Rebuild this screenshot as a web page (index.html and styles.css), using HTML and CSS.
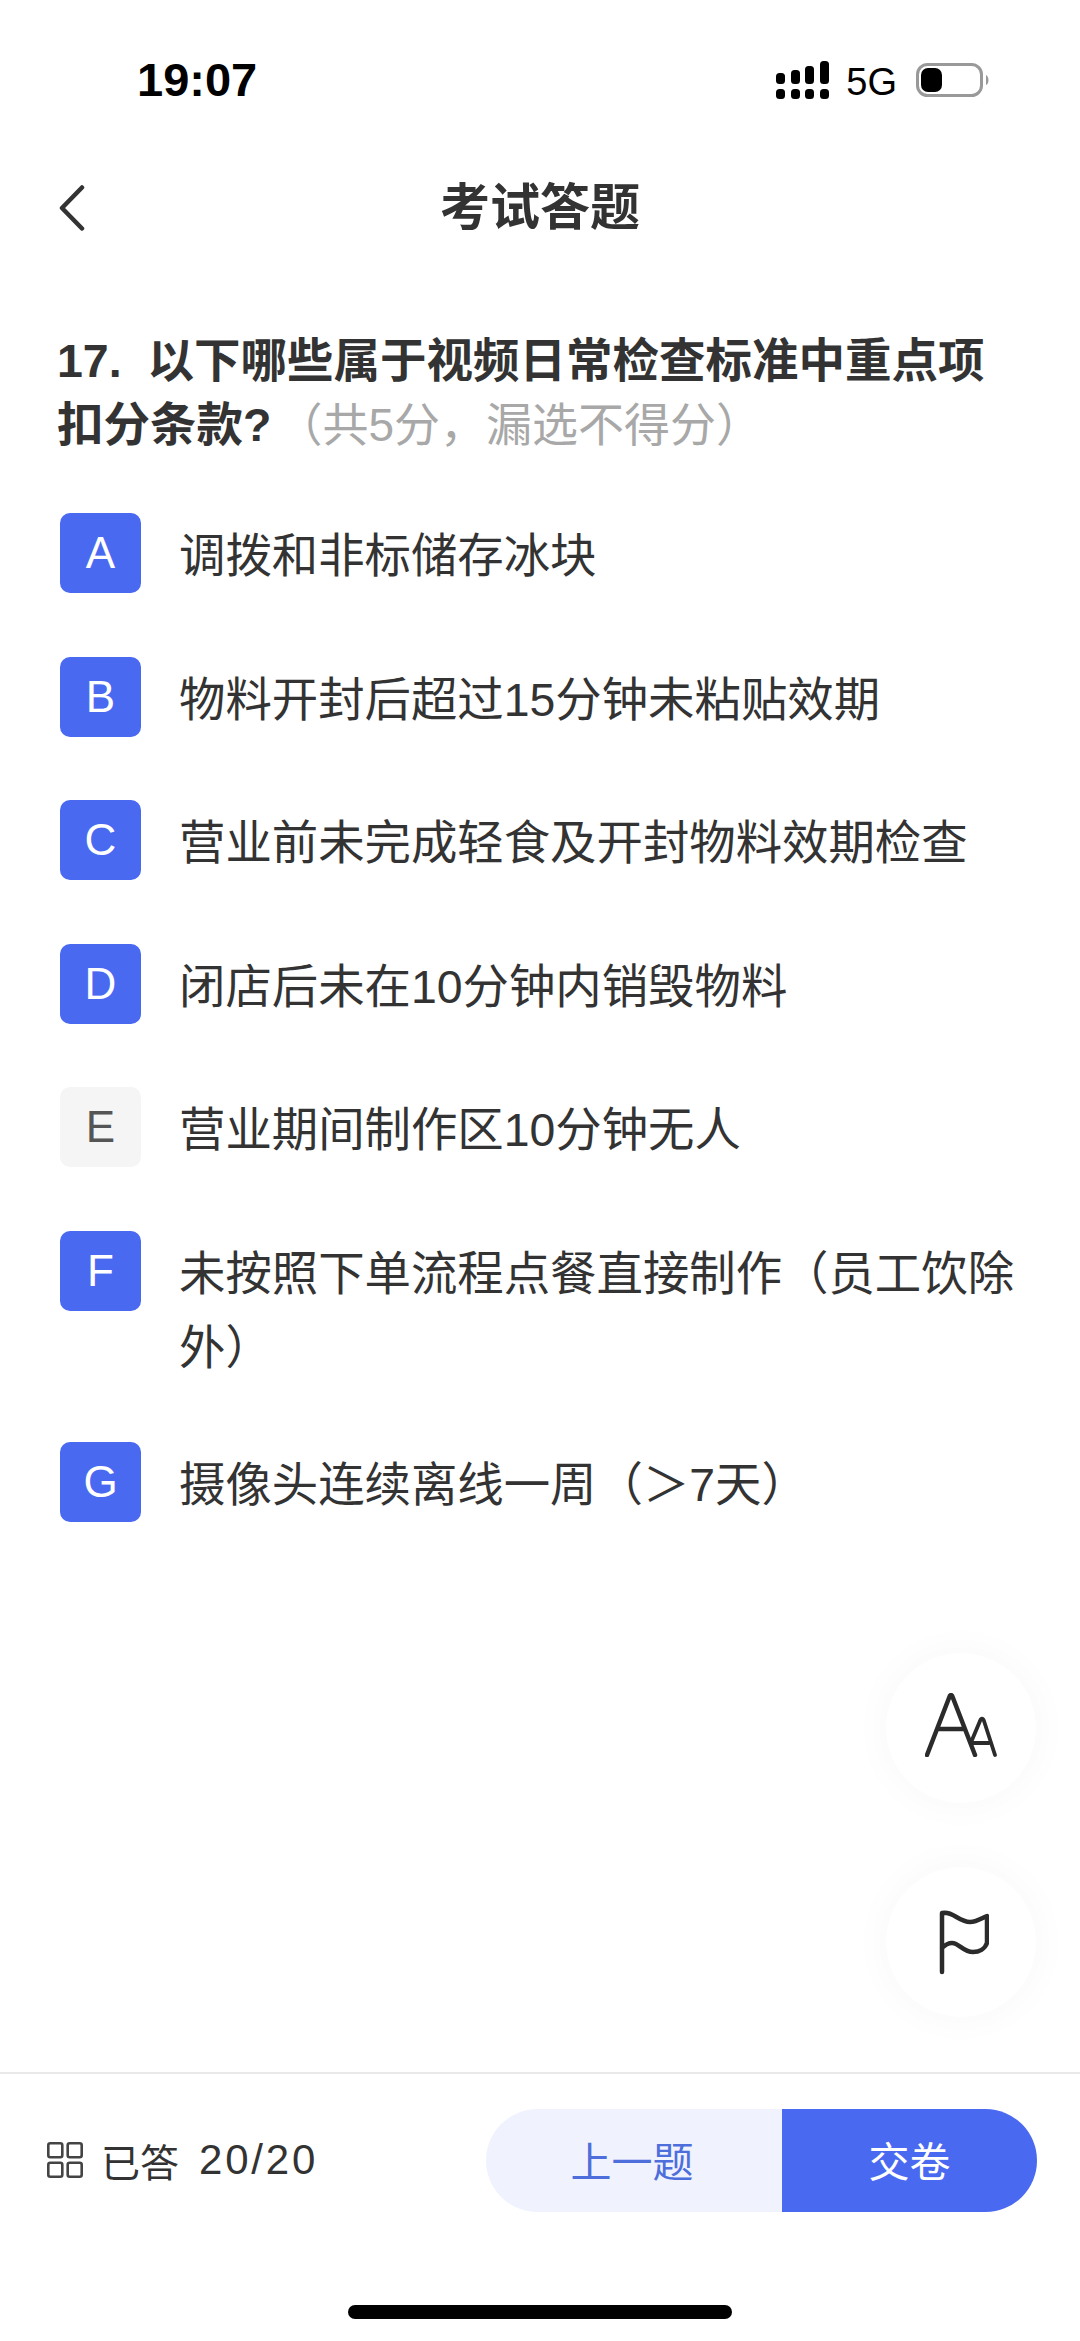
FILE: index.html
```html
<!DOCTYPE html>
<html lang="zh-CN">
<head>
<meta charset="utf-8">
<title>考试答题</title>
<link rel="stylesheet" href="styles.css">
</head>
<body>
<div class="screen">
  <header class="status">
    <span class="clock">19:07</span>
    <div class="status-right">
      <svg class="signal" width="54" height="40" viewBox="0 0 54 40" fill="#000">
        <rect x="0" y="12" width="9" height="11" rx="3.5"/><rect x="15" y="9" width="9" height="14" rx="3.5"/><rect x="29" y="5" width="9" height="18" rx="3.5"/><rect x="44" y="0" width="9" height="23" rx="3.5"/>
        <rect x="0" y="28" width="9" height="10" rx="3.5"/><rect x="15" y="28" width="9" height="10" rx="3.5"/><rect x="29" y="28" width="9" height="10" rx="3.5"/><rect x="44" y="28" width="9" height="10" rx="3.5"/>
      </svg>
      <span class="network">5G</span>
      <svg class="battery" width="74" height="34" viewBox="0 0 74 34">
        <rect x="1.5" y="1.5" width="64" height="31" rx="10" fill="none" stroke="#999" stroke-width="3"/>
        <rect x="5" y="5" width="21" height="24" rx="7" fill="#000"/>
        <path d="M70 12c3 1 3.500 9 0 10z" fill="#999"/>
      </svg>
    </div>
  </header>

  <nav class="topbar">
    <svg class="back" width="26" height="46" viewBox="0 0 26 46" fill="none" stroke="#333" stroke-width="4.500" stroke-linecap="round" stroke-linejoin="round">
      <path d="M23 2.500 3 23l20 20.500"/>
    </svg>
    <h1 class="title">考试答题</h1>
  </nav>

  <main class="paper">
    <h2 class="question">17.&nbsp;&nbsp;以下哪些属于视频日常检查标准中重点项扣分条款?<span class="hint">（共5分，漏选不得分）</span></h2>
    <ul class="options">
      <li class="option"><span class="badge picked">A</span><span class="option-text">调拨和非标储存冰块</span></li>
      <li class="option"><span class="badge picked">B</span><span class="option-text">物料开封后超过15分钟未粘贴效期</span></li>
      <li class="option"><span class="badge picked">C</span><span class="option-text">营业前未完成轻食及开封物料效期检查</span></li>
      <li class="option"><span class="badge picked">D</span><span class="option-text">闭店后未在10分钟内销毁物料</span></li>
      <li class="option"><span class="badge">E</span><span class="option-text">营业期间制作区10分钟无人</span></li>
      <li class="option"><span class="badge picked">F</span><span class="option-text">未按照下单流程点餐直接制作（员工饮除外）</span></li>
      <li class="option"><span class="badge picked">G</span><span class="option-text">摄像头连续离线一周（＞7天）</span></li>
    </ul>

    <button class="fab fab-font" type="button" aria-label="字号">
      <svg class="fab-font-icon" width="72" height="64" viewBox="0 0 72 64" fill="none" stroke="#2b2b2b" stroke-linecap="round" stroke-linejoin="round">
        <path stroke-width="4.500" d="M2 62 24 5c1-4 3-4 4 0l22 57M13 36h26"/>
        <path stroke-width="3.800" d="M47 47 55 28c1-3 3-3 4 0l11 34M47 50h17"/>
      </svg>
    </button>
    <button class="fab fab-flag" type="button" aria-label="标记">
      <svg width="56" height="66" viewBox="0 0 56 66" fill="none" stroke="#2b2b2b" stroke-width="4.500" stroke-linecap="round" stroke-linejoin="round">
        <path d="M9 63V4C20 2 26 13 37 13 44 13 49 9 54 7V34C52 40 46 43 40 43 30 43 26 34 19 34 15 34 12 36 9 39"/>
      </svg>
    </button>
  </main>

  <footer class="bottom">
    <div class="progress">
      <svg class="grid-icon" width="36" height="36" viewBox="0 0 36 36" fill="none" stroke="#444" stroke-width="2.600">
        <rect x="1.300" y="1.300" width="14" height="14" rx="2"/><rect x="20.700" y="1.300" width="14" height="14" rx="2"/>
        <rect x="1.300" y="20.700" width="14" height="14" rx="2"/><rect x="20.700" y="20.700" width="14" height="14" rx="2"/>
      </svg>
      <span class="progress-label">已答</span>
      <span class="progress-count">20/20</span>
    </div>
    <div class="actions">
      <button class="btn btn-prev" type="button">上一题</button>
      <button class="btn btn-submit" type="button">交卷</button>
    </div>
  </footer>
  <div class="home-area"><span class="home-bar"></span></div>
</div>
</body>
</html>
```

FILE: styles.css
```css
* { box-sizing: border-box; }

html, body {
  margin: 0;
  padding: 0;
  background: #fff;
}

body {
  font-family: "Liberation Sans", "Noto Sans CJK SC", sans-serif;
  color: #333;
}

.screen {
  width: 1080px;
  height: 2341px;
  display: flex;
  flex-direction: column;
  overflow: hidden;
}

/* Phone status bar */
.status {
  height: 163px;
  padding: 55px 90px 0 137px;
  display: flex;
  justify-content: space-between;
  align-items: flex-start;
  color: #000;
}

.clock {
  font-size: 47px;
  font-weight: 700;
  line-height: 50px;
}

.status-right {
  display: flex;
  align-items: flex-start;
}

.signal { margin-top: 6px; }

.network {
  margin: 7px 0 0 16px;
  font-size: 38px;
  line-height: 40px;
}

.battery { margin: 8px 0 0 19px; }

/* Title row */
.topbar {
  height: 90px;
  position: relative;
  display: flex;
  align-items: center;
  justify-content: center;
}

.back {
  position: absolute;
  left: 59px;
  top: 22px;
}

.title {
  margin: 0;
  font-size: 50px;
  font-weight: 700;
  line-height: 64px;
  color: #333;
}

/* Question and answers */
.paper {
  flex: 1;
  position: relative;
  padding: 76px 60px 0 57px;
}

.question {
  margin: 0;
  font-size: 46.5px;
  font-weight: 700;
  line-height: 64px;
  color: #333;
}

.hint {
  margin-left: 5px;
  font-size: 46px;
  font-weight: 400;
  color: #a8a8a8;
}

.options {
  list-style: none;
  margin: 56px 0 0;
  padding: 0 0 0 3px;
  display: flex;
  flex-direction: column;
  gap: 63.5px;
}

.option {
  display: flex;
  align-items: flex-start;
  gap: 38px;
}

.badge {
  flex: none;
  width: 81px;
  height: 80px;
  border-radius: 10px;
  display: flex;
  align-items: center;
  justify-content: center;
  font-size: 44px;
  background: #f5f5f5;
  color: #555;
}

.badge.picked {
  background: #4a69f1;
  color: #fff;
}

.option-text {
  margin: 6px 0 -6px;
  font-size: 46.4px;
  line-height: 74px;
  color: #333;
}

/* Floating tools */
.fab {
  position: absolute;
  left: 886px;
  width: 150px;
  height: 150px;
  padding: 0;
  border: 0;
  border-radius: 50%;
  background: #fff;
  box-shadow: 0 0 40px rgba(0, 0, 0, .035);
  display: flex;
  align-items: center;
  justify-content: center;
}

.fab-font { top: 1400px; }
.fab-flag { top: 1614px; }
.fab-font-icon { margin-bottom: 6px; }

/* Answer progress and paging */
.bottom {
  height: 216px;
  border-top: 2px solid #e9e9e9;
  padding: 35px 43px 0 47px;
  display: flex;
  justify-content: space-between;
  align-items: flex-start;
}

.progress {
  height: 102px;
  display: flex;
  align-items: center;
}

.progress-label {
  margin-left: 18px;
  font-size: 39px;
  color: #333;
}

.progress-count {
  margin-left: 20px;
  font-size: 42px;
  letter-spacing: 2.800px;
  color: #333;
}

.actions { display: flex; }

.btn {
  height: 103px;
  padding: 0 0 4px;
  border: 0;
  font-family: inherit;
  font-size: 41px;
}

.btn-prev {
  width: 296px;
  padding-right: 4px;
  border-radius: 52px 0 0 52px;
  background: #f0f3fe;
  color: #4d6edb;
}

.btn-submit {
  width: 255px;
  border-radius: 0 52px 52px 0;
  background: #4a69f1;
  color: #fff;
}

.home-area {
  height: 53px;
  display: flex;
  justify-content: center;
}

.home-bar {
  width: 384px;
  height: 14px;
  margin-top: 17px;
  border-radius: 7px;
  background: #000;
}
```
